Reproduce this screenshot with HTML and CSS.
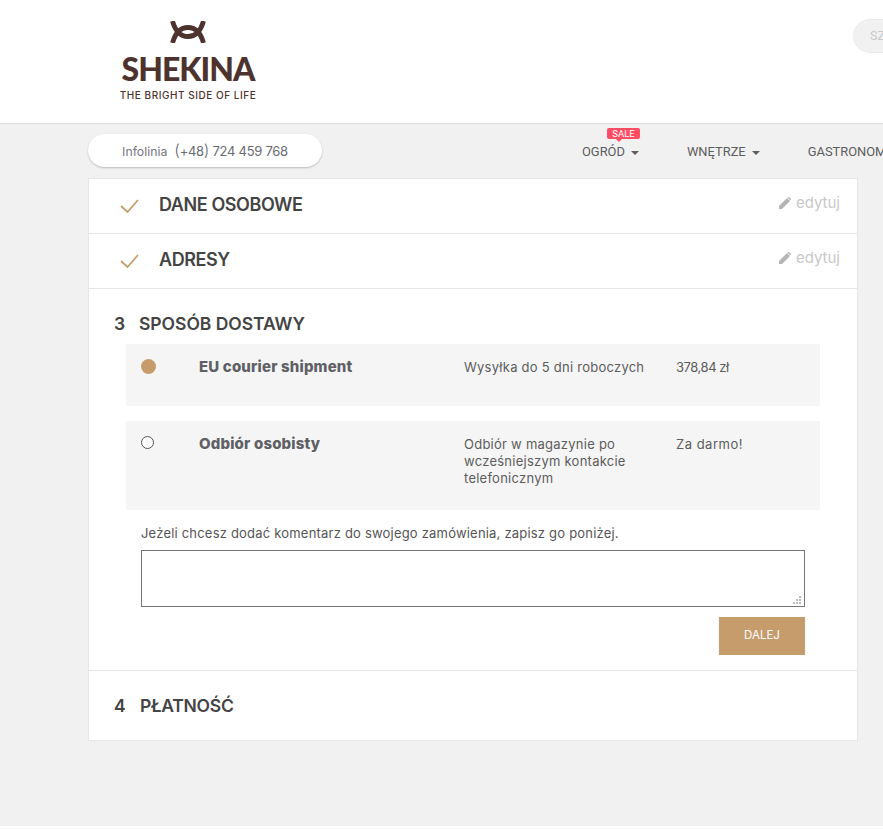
FILE: index.html
```html
<!DOCTYPE html>
<html lang="pl">
<head>
<meta charset="utf-8">
<title>Shekina</title>
<link rel="stylesheet" href="styles.css">
</head>
<body>
<div class="page">
  <header class="top">
    <a class="logo">
      <svg class="logo-mark" viewBox="0 0 36 22" width="36" height="22"><path d="M2.500 0C5 9 10 15.500 18 15.500C26 15.500 31 9 33.500 0M2.500 22C5 13 10 6.500 18 6.500C26 6.500 31 13 33.500 22" fill="none" stroke="#4e322d" stroke-width="4.800"/></svg>
      <span class="logo-name">SHEKINA</span>
      <span class="logo-tag">THE BRIGHT SIDE OF LIFE</span>
    </a>
    <div class="search">SZ</div>
  </header>
  <div class="navbar">
    <div class="phone"><span class="phone-label">Infolinia</span><span class="phone-num"><span class="paren">(</span>+48<span class="paren">)</span> 724 459 768</span></div>
    <nav class="menu">
      <a class="menu-item sale-item"><span class="sale">SALE</span>OGRÓD<i class="caret"></i></a>
      <a class="menu-item">WNĘTRZE<i class="caret"></i></a>
      <a class="menu-item">GASTRONOMIA</a>
    </nav>
  </div>
  <main class="card">
    <section class="step done">
      <svg class="check" viewBox="0 0 20 15" width="20" height="15"><path d="M2 7L8.500 13L19 1" fill="none" stroke="#c69c6d" stroke-width="1.800"/></svg>
      <h2 class="step-title">DANE OSOBOWE</h2>
      <a class="edit"><svg viewBox="0 0 12 12" width="12" height="12"><path d="M0 12V9L8 1L11 4L3 12ZM9 0L10 0L12 2L12 3L11.500 3.500L8.500 0.500Z" fill="#b4b4b4"/></svg>edytuj</a>
    </section>
    <section class="step done">
      <svg class="check" viewBox="0 0 20 15" width="20" height="15"><path d="M2 7L8.500 13L19 1" fill="none" stroke="#c69c6d" stroke-width="1.800"/></svg>
      <h2 class="step-title">ADRESY</h2>
      <a class="edit"><svg viewBox="0 0 12 12" width="12" height="12"><path d="M0 12V9L8 1L11 4L3 12ZM9 0L10 0L12 2L12 3L11.500 3.500L8.500 0.500Z" fill="#b4b4b4"/></svg>edytuj</a>
    </section>
    <section class="current">
      <h2 class="current-title"><span class="num">3</span>SPOSÓB DOSTAWY</h2>
      <div class="option option-first">
        <span class="radio radio-on"></span>
        <strong class="opt-name">EU courier shipment</strong>
        <span class="opt-desc">Wysyłka do 5 dni roboczych</span>
        <span class="opt-price">378,84 zł</span>
      </div>
      <div class="option option-second">
        <span class="radio"></span>
        <strong class="opt-name">Odbiór osobisty</strong>
        <span class="opt-desc">Odbiór w magazynie po wcześniejszym kontakcie telefonicznym</span>
        <span class="opt-price opt-free">Za darmo!</span>
      </div>
      <div class="comment">
        <label class="comment-label" for="c">Jeżeli chcesz dodać komentarz do swojego zamówienia, zapisz go poniżej.</label>
        <div class="box-wrap">
          <textarea id="c" class="comment-box"></textarea>
          <span class="grip"></span>
        </div>
      </div>
      <div class="actions"><button class="next">DALEJ</button></div>
    </section>
    <section class="step last">
      <h2 class="current-title"><span class="num">4</span>PŁATNOŚĆ</h2>
    </section>
  </main>
</div>
</body>
</html>
```
FILE: styles.css
```css
* { box-sizing: border-box; }
html, body { margin: 0; padding: 0; background: #fff; overflow: hidden; }
body { font-family: "Inter", "Noto Sans", sans-serif; color: #4a4a4a; }
.page { height: 826px; background: #f1f1f1; overflow: hidden; }

.top { height: 124px; background: #fff; border-bottom: 1px solid #d9d9d9; display: flex; align-items: flex-start; }
.logo { width: 136px; margin: 21px 0 0 120px; display: flex; flex-direction: column; align-items: center; color: #4e322d; flex: none; }
.logo-mark { display: block; }
.logo-name { font: 900 32px/1 "Lato", sans-serif; letter-spacing: -1px; margin-top: 10px; white-space: nowrap; }
.logo-tag { font: 500 10px/1 "Inter", sans-serif; letter-spacing: 0.540px; margin-top: 5px; white-space: nowrap; }
.search { flex: none; margin: 19px 0 0 597px; width: 120px; height: 34px; background: #f1f1f1; border: 1px solid #ebebeb; border-radius: 17px; padding-left: 16px; font: 400 12.500px/32px "Roboto", sans-serif; color: #c9c9c9; }

.navbar { height: 54px; display: flex; align-items: flex-start; padding-left: 88px; }
.phone { flex: none; width: 234px; height: 33px; margin-top: 10px; background: #fff; border-radius: 17px; box-shadow: 0 1px 2px rgba(0,0,0,.22); display: flex; align-items: center; justify-content: center; gap: 7px; color: #77777f; font-size: 12.300px; }
.phone-label { margin-top: 2px; }
.phone-num { margin-bottom: 2px; font-size: 13px; letter-spacing: -0.280px; color: #6a6a72; }
.paren { font-size: 16px; font-weight: 300; }
.menu { flex: none; display: flex; margin-left: 260px; font: 400 12.900px/14px "Roboto", sans-serif; color: #5d5d5d; white-space: nowrap; }
.menu-item { position: relative; display: flex; align-items: center; margin-top: 21px; margin-right: 48px; }
.caret { width: 0; height: 0; margin: 1px 0 0 6px; border-left: 4px solid transparent; border-right: 4px solid transparent; border-top: 4px solid #5d5d5d; }
.sale { position: absolute; left: 25px; top: -17px; width: 33px; height: 11px; background: #ff4d63; border-radius: 2px; color: #fff; font: 400 9.500px/11px "Roboto", sans-serif; text-align: center; }
.sale::after { content: ""; position: absolute; left: 9px; top: 11px; border-left: 3px solid transparent; border-right: 3px solid transparent; border-top: 3px solid #ff4d63; }

.card { width: 770px; margin-left: 88px; background: #fff; border: 1px solid #e6e6e6; height: 563px; }
.step { display: flex; align-items: flex-start; height: 55px; border-bottom: 1px solid #e6e6e6; padding-left: 30px; }
.check { flex: none; margin: 20px 0 0 0; }
.step-title { margin: 15px 0 0 20px; font: 600 18px/22px "Inter", sans-serif; letter-spacing: -0.420px; color: #444; white-space: nowrap; }
.edit { margin: 14px 17px 0 auto; display: flex; align-items: center; gap: 5px; font-size: 15px; line-height: 20px; color: #c8c8c8; }
.current { height: 382px; border-bottom: 1px solid #e6e6e6; padding: 24px 37px 0 37px; }
.current-title { margin: 0 0 0 -12px; font: 600 17.500px/22px "Inter", sans-serif; letter-spacing: -0.030px; color: #444; white-space: nowrap; display: flex; }
.num { width: 25px; flex: none; }
.option { background: #f5f5f5; display: grid; grid-template-columns: 73px 265px 212px 1fr; align-items: start; padding-top: 15px; font-size: 13px; line-height: 17px; color: #5c5c5c; }
.option-first { height: 62px; margin-top: 9px; }
.option-second { height: 89px; margin-top: 15px; }
.radio { width: 13px; height: 13px; margin-left: 15px; background: #fff; border: 1px solid #555; border-radius: 50%; }
.radio-on { width: 15px; height: 15px; background: #c69c6d; border: 0; }
.opt-name { font-size: 15px; line-height: 15px; font-weight: 800; color: #5f5f66; letter-spacing: 0.160px; }
.opt-desc { padding-right: 25px; letter-spacing: 0.250px; }
.opt-price { letter-spacing: -0.450px; }
.opt-free { letter-spacing: 0.500px; }
.comment { padding: 14px 15px 0; }
.comment-label { display: block; font-size: 13px; line-height: 18px; color: #555; letter-spacing: 0.200px; white-space: nowrap; }
.box-wrap { position: relative; width: 664px; margin-top: 8px; }
.comment-box { display: block; width: 664px; height: 57px; background: #fff; border: 1px solid #767676; resize: none; }
.grip { position: absolute; right: 4px; bottom: 3px; width: 2px; height: 2px; background: #bbb; box-shadow: -3px 0 #bbb, -6px 0 #bbb, 0 -3px #bbb, -3px -3px #bbb, 0 -6px #bbb; }
.actions { display: flex; justify-content: flex-end; padding: 10px 15px 0 0; }
.next { width: 86px; height: 38px; background: #c69c6d; color: #fff; border: 0; font: 400 11.500px/1 "Inter", sans-serif; }
.step.last { display: block; height: 70px; border-bottom: 0; padding: 24px 37px 0; }
.step.last .current-title { letter-spacing: -0.250px; }
.step.last .num { width: 26px; }
```
